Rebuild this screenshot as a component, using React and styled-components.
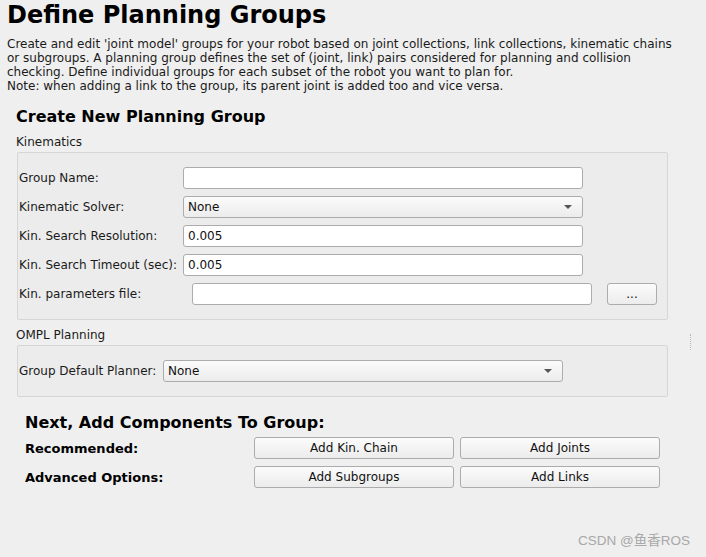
import styled, { createGlobalStyle } from 'styled-components';

const GlobalStyle = createGlobalStyle`
  html, body {
    margin: 0;
    background: #efefef;
  }
  body {
    font-family: "DejaVu Sans", "Noto Sans CJK SC", sans-serif;
    color: #1a1a1a;
  }
`;

const Page = styled.div`
  position: relative;
  width: 706px;
  height: 557px;
  padding: 1px 7px 0;
  box-sizing: border-box;
`;

const Title = styled.h1`
  margin: 0;
  font-size: 24px;
  line-height: 29px;
  font-weight: bold;
  color: #000;
`;

const Description = styled.p`
  margin: 7px 0 0;
  font-size: 12px;
  line-height: 14px;
  color: #1a1a1a;
`;

const Section = styled.div`
  padding-left: ${({ indent }) => indent || 9}px;
`;

const SectionTitle = styled.h2`
  margin: ${({ top }) => top || 0}px 0 0;
  font-size: 16px;
  line-height: 22px;
  font-weight: bold;
  color: #000;
`;

const GroupLabel = styled.div`
  margin-top: ${({ top }) => top || 0}px;
  font-size: 12px;
  line-height: 14px;
`;

const GroupBox = styled.div`
  margin: 3px 0 0 1px;
  width: 651px;
  box-sizing: border-box;
  border: 1px solid #d6d6d6;
  border-radius: 2px;
  background: #ececec;
  padding: 14px 2px 14px 1px;
  display: flex;
  flex-direction: column;
  gap: 7px;
`;

const Row = styled.div`
  display: flex;
  align-items: center;
  height: 22px;
`;

const Label = styled.label`
  width: ${({ width }) => width}px;
  flex: none;
  font-size: 12px;
`;

const TextInput = styled.input`
  width: 400px;
  height: 22px;
  box-sizing: border-box;
  margin-left: ${({ offset }) => offset || 0}px;
  border: 1px solid #acacac;
  border-radius: 3px;
  background: #fff;
  padding: 0 4px;
  font-family: inherit;
  font-size: 12px;
  color: #111;
  outline: none;
`;

const Combo = styled.div`
  width: 400px;
  height: 22px;
  box-sizing: border-box;
  border: 1px solid #acacac;
  border-radius: 3px;
  background: linear-gradient(#fbfbfb, #ececec);
  padding: 0 10px 0 4px;
  display: flex;
  align-items: center;
  justify-content: space-between;
  font-size: 12px;
  color: #111;
`;

const Arrow = styled.span`
  width: 0;
  height: 0;
  border-left: 4px solid transparent;
  border-right: 4px solid transparent;
  border-top: 4px solid #555;
`;

const Button = styled.button`
  width: ${({ width }) => width || 200}px;
  height: 22px;
  box-sizing: border-box;
  margin-left: ${({ offset }) => offset || 0}px;
  border: 1px solid #acacac;
  border-radius: 3px;
  background: linear-gradient(#fbfbfb, #ececec);
  font-family: inherit;
  font-size: 12px;
  color: #111;
  padding: 0;
`;

const ActionGrid = styled.div`
  margin-top: 3px;
  display: grid;
  grid-template-columns: 223px 200px 200px;
  column-gap: 6px;
  row-gap: 7px;
  align-items: center;
`;

const ActionLabel = styled.div`
  font-size: 13px;
  font-weight: bold;
  color: #000;
`;

const Handle = styled.div`
  position: absolute;
  left: 690px;
  top: 334px;
  height: 16px;
  border-left: 1px dotted #b8b8b8;
`;

const Watermark = styled.div`
  position: absolute;
  right: 16px;
  bottom: 8px;
  font-family: "Liberation Sans", "Noto Sans CJK SC", sans-serif;
  font-size: 13.5px;
  color: #a8a8a8;
`;

const App = () => (
  <Page>
    <GlobalStyle />
    <Title>Define Planning Groups</Title>
    <Description>
      Create and edit 'joint model' groups for your robot based on joint collections, link collections, kinematic chains
      <br />
      or subgroups. A planning group defines the set of (joint, link) pairs considered for planning and collision
      <br />
      checking. Define individual groups for each subset of the robot you want to plan for.
      <br />
      Note: when adding a link to the group, its parent joint is added too and vice versa.
    </Description>

    <Section>
      <SectionTitle top={13}>Create New Planning Group</SectionTitle>
      <GroupLabel top={7}>Kinematics</GroupLabel>
      <GroupBox>
        <Row>
          <Label width={164}>Group Name:</Label>
          <TextInput />
        </Row>
        <Row>
          <Label width={164}>Kinematic Solver:</Label>
          <Combo>None<Arrow /></Combo>
        </Row>
        <Row>
          <Label width={164}>Kin. Search Resolution:</Label>
          <TextInput defaultValue="0.005" />
        </Row>
        <Row>
          <Label width={164}>Kin. Search Timeout (sec):</Label>
          <TextInput defaultValue="0.005" />
        </Row>
        <Row>
          <Label width={173}>Kin. parameters file:</Label>
          <TextInput />
          <Button width={50} offset={15}>...</Button>
        </Row>
      </GroupBox>

      <GroupLabel top={8}>OMPL Planning</GroupLabel>
      <GroupBox>
        <Row>
          <Label width={144}>Group Default Planner:</Label>
          <Combo>None<Arrow /></Combo>
        </Row>
      </GroupBox>
    </Section>

    <Section indent={18}>
      <SectionTitle top={15}>Next, Add Components To Group:</SectionTitle>
      <ActionGrid>
        <ActionLabel>Recommended:</ActionLabel>
        <Button>Add Kin. Chain</Button>
        <Button>Add Joints</Button>
        <ActionLabel>Advanced Options:</ActionLabel>
        <Button>Add Subgroups</Button>
        <Button>Add Links</Button>
      </ActionGrid>
    </Section>

    <Handle />
    <Watermark>CSDN @鱼香ROS</Watermark>
  </Page>
);

export default App;
